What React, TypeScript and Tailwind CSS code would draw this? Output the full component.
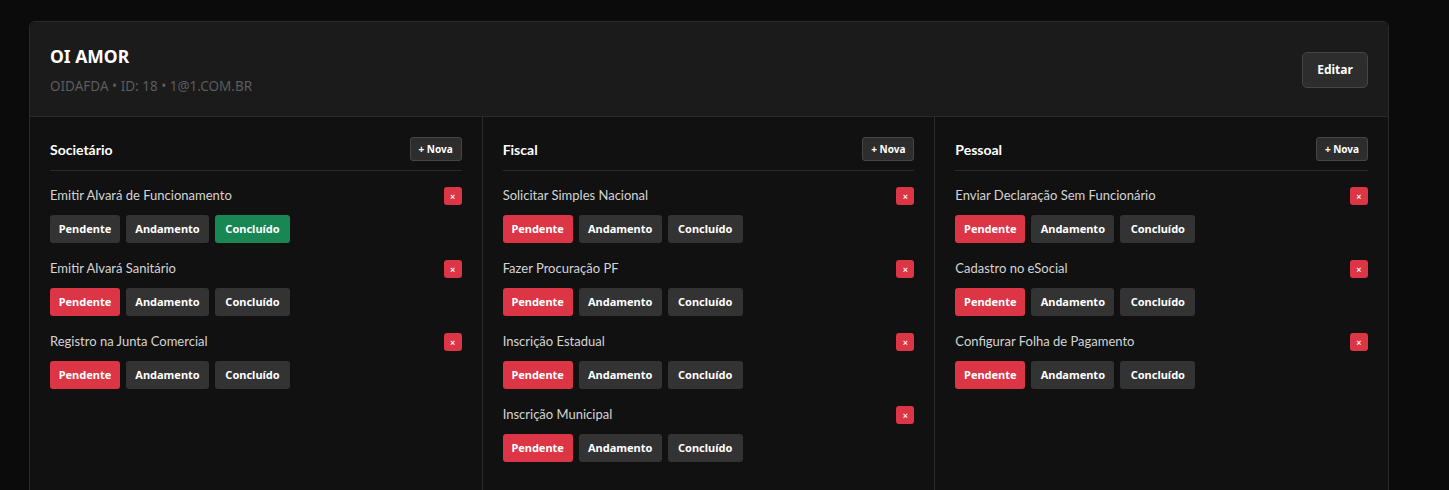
import React from "react";

type Status = "pendente" | "andamento" | "concluido";

type Task = { name: string; status: Status };

const columns: { title: string; tasks: Task[] }[] = [
  {
    title: "Societário",
    tasks: [
      { name: "Emitir Alvará de Funcionamento", status: "concluido" },
      { name: "Emitir Alvará Sanitário", status: "pendente" },
      { name: "Registro na Junta Comercial", status: "pendente" },
    ],
  },
  {
    title: "Fiscal",
    tasks: [
      { name: "Solicitar Simples Nacional", status: "pendente" },
      { name: "Fazer Procuração PF", status: "pendente" },
      { name: "Inscrição Estadual", status: "pendente" },
      { name: "Inscrição Municipal", status: "pendente" },
    ],
  },
  {
    title: "Pessoal",
    tasks: [
      { name: "Enviar Declaração Sem Funcionário", status: "pendente" },
      { name: "Cadastro no eSocial", status: "pendente" },
      { name: "Configurar Folha de Pagamento", status: "pendente" },
    ],
  },
];

const btn = "h-[28px] rounded-[3px] font-['Noto_Sans',sans-serif] text-[11px] font-bold text-white";

function TaskItem({ task }: { task: Task }) {
  return (
    <div className="flex flex-col gap-[10px]">
      <div className="flex h-[18px] items-center justify-between">
        <span className="text-[13px] text-[#d4d4d4]">{task.name}</span>
        <button className="flex h-[18px] w-[18px] items-center justify-center rounded-[3px] bg-[#dc3545] text-[9px] font-bold leading-none text-white">
          ×
        </button>
      </div>
      <div className="flex gap-[6px]">
        <button
          className={`${btn} w-[70px] ${task.status === "pendente" ? "bg-[#dc3545]" : "bg-[#333333]"}`}
        >
          Pendente
        </button>
        <button
          className={`${btn} w-[83px] ${task.status === "andamento" ? "bg-[#e0a800]" : "bg-[#333333]"}`}
        >
          Andamento
        </button>
        <button
          className={`${btn} w-[75px] ${task.status === "concluido" ? "bg-[#198754]" : "bg-[#333333]"}`}
        >
          Concluído
        </button>
      </div>
    </div>
  );
}

export default function App() {
  return (
    <div
      className="min-h-screen bg-[#0b0b0b] pl-[29px] pt-[21px] pr-[60px]"
      style={{ fontFamily: "Lato, sans-serif" }}
    >
      <div className="w-[1360px] overflow-hidden rounded-t-[6px] border border-[#2a2a2a] bg-[#111111]">
        <div className="flex items-center justify-between border-b border-[#2a2a2a] bg-[#1b1b1b] px-[20px] pt-[22px] pb-[20px]">
          <div>
            <h1 className="font-['Noto_Sans',sans-serif] text-[17.5px] font-bold leading-[24px] text-white">
              OI AMOR
            </h1>
            <p className="mt-[8px] font-['Noto_Sans',sans-serif] text-[13.5px] leading-[20px] text-[#5c5c5c]">
              OIDAFDA • ID: 18 • 1@1.COM.BR
            </p>
          </div>
          <button className="h-[36px] w-[66px] rounded-[5px] border border-[#454545] bg-[#2d2d2d] font-['Noto_Sans',sans-serif] text-[12px] font-bold text-white">
            Editar
          </button>
        </div>
        <div className="grid min-h-[380px] grid-cols-3">
          {columns.map((col, i) => (
            <div
              key={col.title}
              className={`px-[20px] pt-[20px] pb-[20px] ${i < 2 ? "border-r border-[#2a2a2a]" : ""}`}
            >
              <div className="flex items-center justify-between border-b border-[#2a2a2a] pb-[9px]">
                <h2 className="text-[14px] font-bold text-white">{col.title}</h2>
                <button className="h-[24px] w-[52px] rounded-[3px] border border-[#454545] bg-[#2d2d2d] font-['Noto_Sans',sans-serif] text-[10px] font-bold text-white">
                  + Nova
                </button>
              </div>
              <div className="mt-[16px] flex flex-col gap-[17px]">
                {col.tasks.map((t) => (
                  <TaskItem key={t.name} task={t} />
                ))}
              </div>
            </div>
          ))}
        </div>
      </div>
    </div>
  );
}
